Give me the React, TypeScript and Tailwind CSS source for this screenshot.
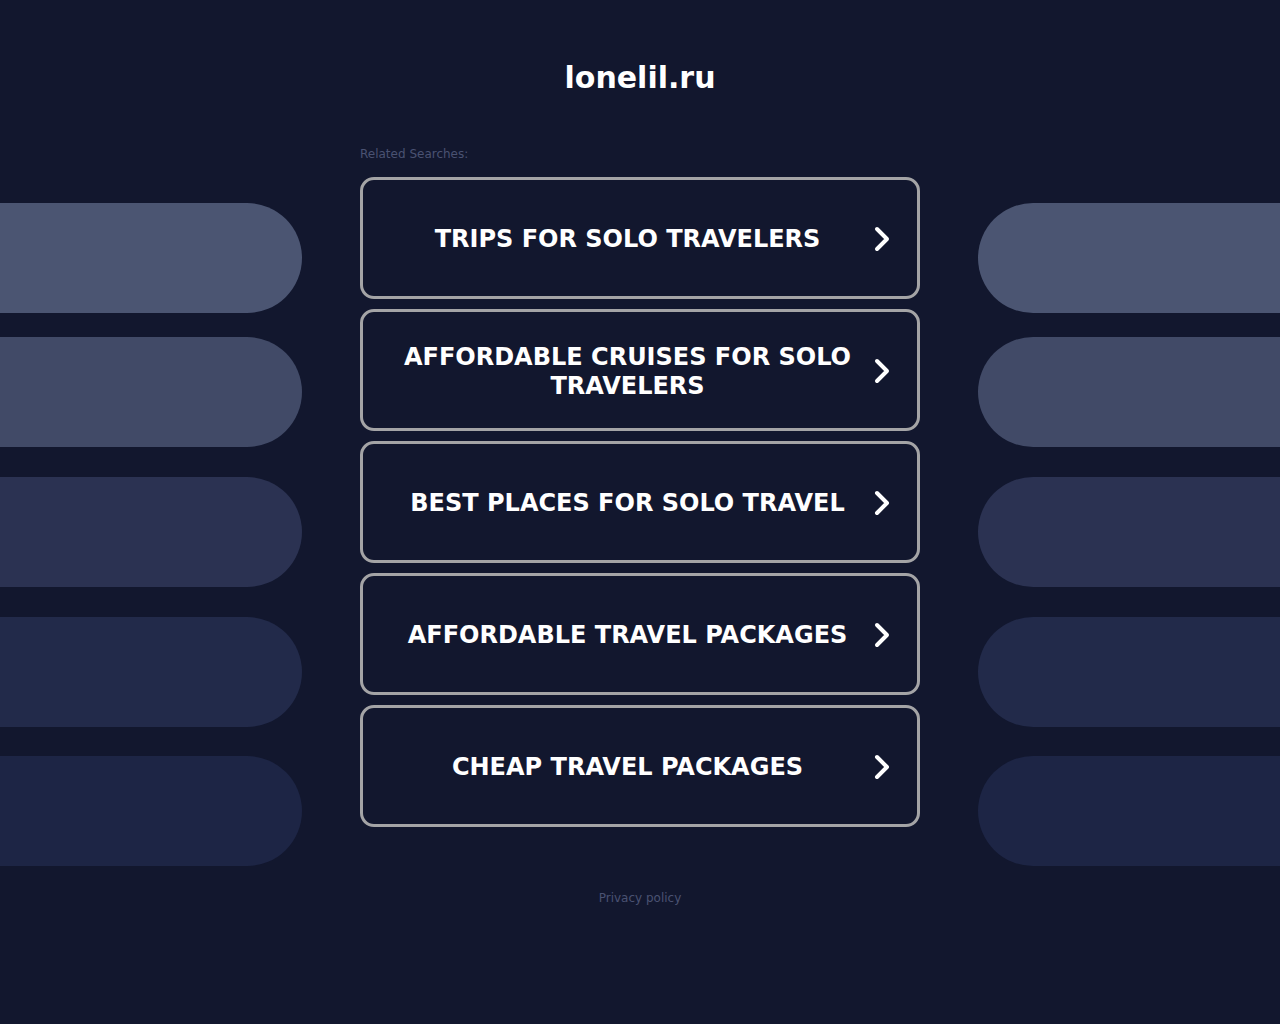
const searches = [
  "TRIPS FOR SOLO TRAVELERS",
  "AFFORDABLE CRUISES FOR SOLO TRAVELERS",
  "BEST PLACES FOR SOLO TRAVEL",
  "AFFORDABLE TRAVEL PACKAGES",
  "CHEAP TRAVEL PACKAGES",
];

const Chevron = () => (
  <svg width="20" height="30" viewBox="0 0 20 30" className="shrink-0">
    <path d="M5 5 L15 15 L5 25" fill="none" stroke="white" strokeWidth="4" strokeLinecap="round" strokeLinejoin="round"/>
  </svg>
);

const Pills = ({side}: {side: "left" | "right"}) => {
  const round = side === "left" ? "rounded-r-full" : "rounded-l-full";
  return (
    <div className="w-[302px] shrink-0 flex flex-col pt-[203px]">
      <div className={`h-[110px] bg-[#4b5572] ${round}`}/>
      <div className={`h-[110px] mt-[24px] bg-[#414a67] ${round}`}/>
      <div className={`h-[110px] mt-[30px] bg-[#2b3252] ${round}`}/>
      <div className={`h-[110px] mt-[30px] bg-[#222a4a] ${round}`}/>
      <div className={`h-[110px] mt-[29px] bg-[#1d2545] ${round}`}/>
    </div>
  );
};

const App = () => {
  return (
    <div className="min-h-[1024px] w-full bg-[#12172e] text-white" style={{fontFamily: '"DejaVu Sans", sans-serif'}}>
      <div className="flex justify-between">
        <Pills side="left"/>
        <div className="w-[560px] flex flex-col">
          <h1 className="text-[30px] leading-[36px] font-bold text-center pt-[60px]">lonelil.ru</h1>
          <p className="text-[12px] leading-[18px] text-[#4a5272] mt-[49px]">Related Searches:</p>
          <div className="flex flex-col gap-[10px] mt-[14px]">
            {searches.map((s, i) => (
              <a key={i} href="#"
                 className="h-[122px] border-[3px] border-[#a4a4a6] rounded-[14px] flex items-center pl-[22px] pr-[25px]">
                <span className="flex-1 text-center text-[24px] leading-[29px] font-bold pt-[3px]">{s}</span>
                <span className="ml-[2px] pt-[1px]"><Chevron/></span>
              </a>
            ))}
          </div>
          <p className="text-[12px] leading-[18px] text-[#4a5272] text-center mt-[62px]">Privacy policy</p>
        </div>
        <Pills side="right"/>
      </div>
    </div>
  );
};

export default App;
